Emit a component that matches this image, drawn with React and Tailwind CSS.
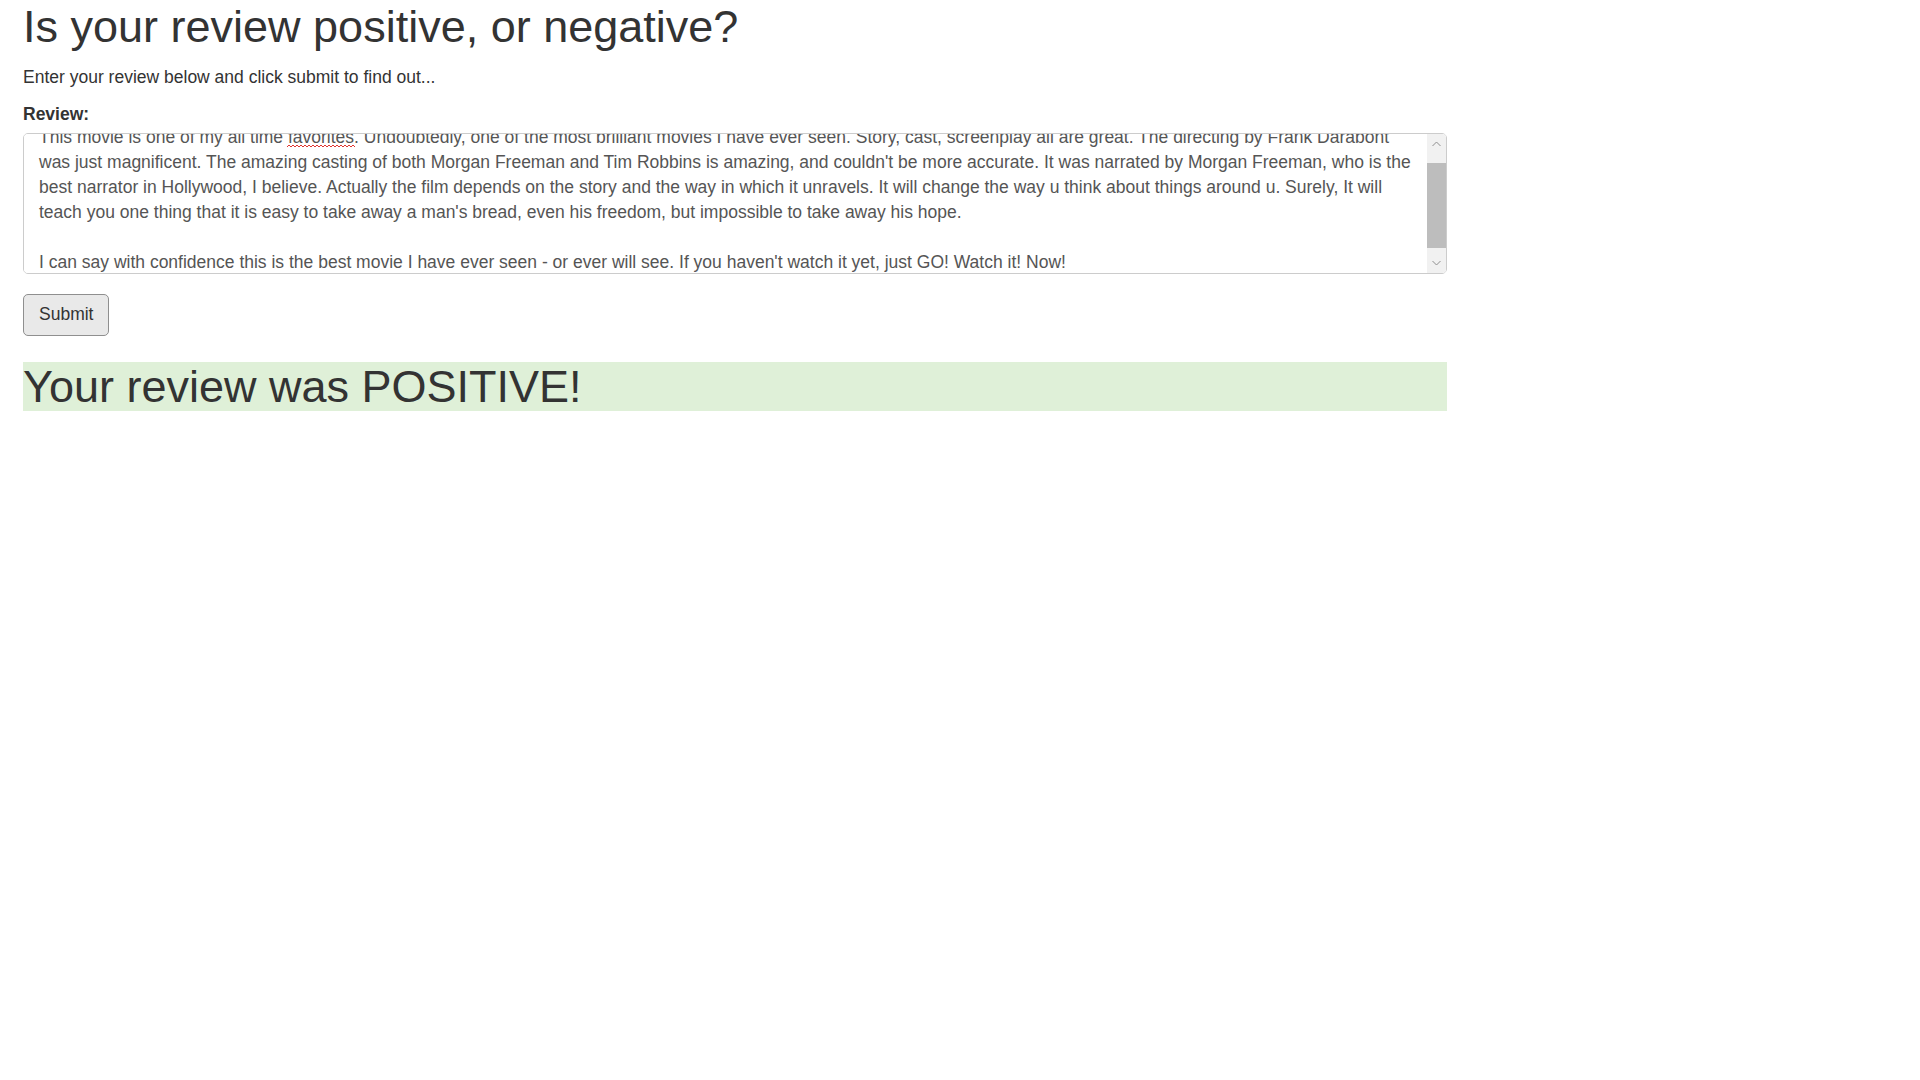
import { useEffect, useRef } from "react";

const review = `This movie is one of my all time favorites. Undoubtedly, one of the most brilliant movies I have ever seen. Story, cast, screenplay all are great. The directing by Frank Darabont was just magnificent. The amazing casting of both Morgan Freeman and Tim Robbins is amazing, and couldn't be more accurate. It was narrated by Morgan Freeman, who is the best narrator in Hollywood, I believe. Actually the film depends on the story and the way in which it unravels. It will change the way u think about things around u. Surely, It will teach you one thing that it is easy to take away a man's bread, even his freedom, but impossible to take away his hope.

I can say with confidence this is the best movie I have ever seen - or ever will see. If you haven't watch it yet, just GO! Watch it! Now!`;

function Chevron({ up }) {
  return (
    <svg width="9" height="6" viewBox="0 0 9 6" className="text-[#8e8e8e]">
      <polyline
        points={up ? "0.5,5 4.5,1 8.5,5" : "0.5,1 4.5,5 8.5,1"}
        fill="none"
        stroke="currentColor"
        strokeWidth="1"
      />
    </svg>
  );
}

// spell-check squiggle drawn over the misspelled word
function Squiggle() {
  let d = "M0 2";
  for (let x = 0; x < 68; x += 4) d += ` l2 -2 l2 2`;
  return (
    <svg width="68" height="4" viewBox="0 0 68 4" className="pointer-events-none absolute left-[264px] top-[12px]">
      <path d={d} fill="none" stroke="#e0342f" strokeWidth="1" />
    </svg>
  );
}

export default function App() {
  const areaRef = useRef(null);

  useEffect(() => {
    if (areaRef.current) areaRef.current.scrollTop = 16;
  }, []);

  return (
    <div className="min-h-screen bg-white pl-[23px] pt-[2px] text-[#333] font-['Liberation_Sans',Arial,sans-serif]">
      <h1 className="text-[45px] leading-[49.5px] font-normal">Is your review positive, or negative?</h1>
      <p className="mt-[13px] text-[17.5px] leading-[25px]">Enter your review below and click submit to find out...</p>

      <form className="mt-[12px] w-[1424px]" onSubmit={(e) => e.preventDefault()}>
        <label htmlFor="review" className="block text-[17.5px] leading-[25px] font-bold">Review:</label>
        <div className="relative mt-[6px] h-[141px] w-[1424px]">
          <textarea
            id="review"
            ref={areaRef}
            defaultValue={review}
            spellCheck={false}
            className="block h-[141px] w-[1424px] resize-none overflow-y-scroll rounded-[5px] border border-[#ccc] bg-white py-[7.5px] pl-[15px] pr-[34px] text-[17.5px] leading-[25px] text-[#555] outline-none [scrollbar-width:none]"
          />
          <Squiggle />
          <div className="absolute right-[1px] top-[1px] bottom-[1px] flex w-[19px] flex-col rounded-r-[4px] bg-[#f1f1f1]">
            <div className="flex h-[20px] items-center justify-center">
              <Chevron up />
            </div>
            <div className="h-[9px]" />
            <div className="h-[85px] bg-[#bdbdbd]" />
            <div className="flex-1" />
            <div className="flex h-[20px] items-center justify-center">
              <Chevron />
            </div>
          </div>
        </div>
        <button
          type="submit"
          className="mt-[20px] h-[42px] rounded-[5px] border border-[#8f8f8f] bg-[#e9e9e9] px-[15px] text-[17.5px] leading-[25px] text-[#333]"
        >
          Submit
        </button>
      </form>

      <h1 className="mt-[26px] w-[1424px] bg-[#dff0d8] text-[45px] leading-[49.5px] font-normal">Your review was POSITIVE!</h1>
    </div>
  );
}
